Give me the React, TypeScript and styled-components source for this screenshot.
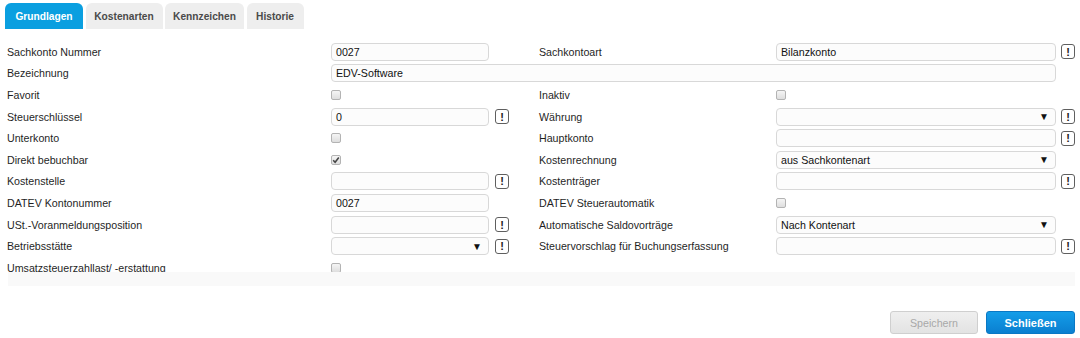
import React from 'react';
import styled, { createGlobalStyle } from 'styled-components';

const GlobalStyle = createGlobalStyle`
  html, body {
    margin: 0;
    padding: 0;
    background: #fff;
  }
  body {
    font-family: "Liberation Sans", Arial, sans-serif;
    font-size: 10.67px;
    color: #1f1f1f;
  }
`;

const Page = styled.div`
  width: 1080px;
  height: 338px;
  overflow: hidden;
  display: flex;
  flex-direction: column;
`;

const TabBar = styled.div`
  display: flex;
  gap: 2.5px;
  padding: 3px 0 0 5px;
  height: 26px;
`;

const Tab = styled.div<{ $active?: boolean; $width: number }>`
  width: ${p => p.$width}px;
  display: flex;
  align-items: center;
  justify-content: center;
  font-size: 10.2px;
  font-weight: bold;
  border-radius: 6px 6px 0 0;
  background: ${p => (p.$active ? '#0a9fe0' : '#eeeeee')};
  color: ${p => (p.$active ? '#ffffff' : '#4a4a4a')};
`;

const FormPanel = styled.div`
  height: 243px;
  box-sizing: border-box;
  padding: 12px 0 0 7px;
  overflow: hidden;
`;

const FormGrid = styled.div`
  display: grid;
  grid-template-columns: 324px 158px 50px 237px 280px 24px;
  grid-auto-rows: 21.6px;
`;

const Label = styled.div`
  display: flex;
  align-items: center;
  white-space: nowrap;
`;

const Cell = styled.div<{ $wide?: boolean }>`
  display: flex;
  align-items: center;
  grid-column: ${p => (p.$wide ? 'span 4' : 'span 1')};
`;

const ActionCell = styled.div<{ $inset: number }>`
  display: flex;
  align-items: center;
  padding-left: ${p => p.$inset}px;
`;

const TextBox = styled.div`
  width: 100%;
  height: 18px;
  box-sizing: border-box;
  border: 1px solid #d8d8d8;
  border-radius: 4px;
  background: #fcfcfc;
  padding: 0 4px;
  display: flex;
  align-items: center;
  justify-content: space-between;
  color: #111;
  white-space: nowrap;
`;

const Arrow = styled.span`
  font-size: 10px;
  color: #111;
  margin-right: 2px;
`;

const Check = styled.span<{ $checked?: boolean }>`
  width: 10px;
  height: 10px;
  box-sizing: border-box;
  border: 1px solid #b3b3b3;
  border-radius: 2px;
  background: linear-gradient(#f5f5f5, #dedede);
  display: flex;
  align-items: center;
  justify-content: center;
`;

const Bang = styled.span`
  width: 14px;
  height: 15px;
  box-sizing: border-box;
  border: 1px solid #5f5f5f;
  border-radius: 3px;
  background: #fff;
  display: flex;
  align-items: center;
  justify-content: center;
  font-size: 11px;
  font-weight: bold;
  color: #222;
`;

const Band = styled.div`
  height: 14px;
  margin: 0 5px 0 8px;
  background: #f9f9f9;
`;

const Footer = styled.div`
  display: flex;
  justify-content: flex-end;
  gap: 8px;
  padding: 25px 5px 0 0;
`;

const Button = styled.button<{ $primary?: boolean }>`
  width: ${p => (p.$primary ? 89 : 88)}px;
  height: 23px;
  border-radius: 3px;
  font-family: "Liberation Sans", Arial, sans-serif;
  font-size: ${p => (p.$primary ? '11px' : '10.67px')};
  font-weight: ${p => (p.$primary ? 'bold' : 'normal')};
  border: 1px solid ${p => (p.$primary ? '#0a78c4' : '#cfcfcf')};
  background: ${p =>
    p.$primary ? 'linear-gradient(#149de8, #0a7fd0)' : 'linear-gradient(#efefef, #e3e3e3)'};
  color: ${p => (p.$primary ? '#ffffff' : '#a8a8a8')};
  padding: 0;
`;

type Control =
  | { kind: 'text'; value?: string; wide?: boolean; action?: boolean }
  | { kind: 'select'; value?: string; action?: boolean }
  | { kind: 'check'; checked?: boolean }
  | { kind: 'none' };

type Side = { label: string; control: Control };

const tabs = [
  { label: 'Grundlagen', width: 78 },
  { label: 'Kostenarten', width: 77 },
  { label: 'Kennzeichen', width: 79 },
  { label: 'Historie', width: 57 },
];

const rows: [Side, Side | null][] = [
  [
    { label: 'Sachkonto Nummer', control: { kind: 'text', value: '0027' } },
    { label: 'Sachkontoart', control: { kind: 'text', value: 'Bilanzkonto', action: true } },
  ],
  [{ label: 'Bezeichnung', control: { kind: 'text', value: 'EDV-Software', wide: true } }, null],
  [
    { label: 'Favorit', control: { kind: 'check' } },
    { label: 'Inaktiv', control: { kind: 'check' } },
  ],
  [
    { label: 'Steuerschlüssel', control: { kind: 'text', value: '0', action: true } },
    { label: 'Währung', control: { kind: 'select', action: true } },
  ],
  [
    { label: 'Unterkonto', control: { kind: 'check' } },
    { label: 'Hauptkonto', control: { kind: 'text', action: true } },
  ],
  [
    { label: 'Direkt bebuchbar', control: { kind: 'check', checked: true } },
    { label: 'Kostenrechnung', control: { kind: 'select', value: 'aus Sachkontenart' } },
  ],
  [
    { label: 'Kostenstelle', control: { kind: 'text', action: true } },
    { label: 'Kostenträger', control: { kind: 'text', action: true } },
  ],
  [
    { label: 'DATEV Kontonummer', control: { kind: 'text', value: '0027' } },
    { label: 'DATEV Steuerautomatik', control: { kind: 'check' } },
  ],
  [
    { label: 'USt.-Voranmeldungsposition', control: { kind: 'text', action: true } },
    { label: 'Automatische Saldovorträge', control: { kind: 'select', value: 'Nach Kontenart' } },
  ],
  [
    { label: 'Betriebsstätte', control: { kind: 'select', action: true } },
    { label: 'Steuervorschlag für Buchungserfassung', control: { kind: 'text', action: true } },
  ],
  [{ label: 'Umsatzsteuerzahllast/ -erstattung', control: { kind: 'check' } }, null],
];

function CheckMark() {
  return (
    <svg width="8" height="8" viewBox="0 0 8 8">
      <path d="M1.2 4.3 L3.1 6.2 L6.8 1.6" fill="none" stroke="#444" strokeWidth="1.6" />
    </svg>
  );
}

function ControlView({ control }: { control: Control }) {
  switch (control.kind) {
    case 'text':
      return <TextBox>{control.value}</TextBox>;
    case 'select':
      return (
        <TextBox>
          <span>{control.value}</span>
          <Arrow>▼</Arrow>
        </TextBox>
      );
    case 'check':
      return <Check $checked={control.checked}>{control.checked && <CheckMark />}</Check>;
    default:
      return null;
  }
}

function hasAction(c: Control) {
  return (c.kind === 'text' || c.kind === 'select') && !!c.action;
}

function FormRow({ left, right }: { left: Side; right: Side | null }) {
  const wide = left.control.kind === 'text' && !!left.control.wide;
  return (
    <>
      <Label>{left.label}</Label>
      <Cell $wide={wide}>
        <ControlView control={left.control} />
      </Cell>
      {!wide && (
        <ActionCell $inset={6}>{hasAction(left.control) && <Bang>!</Bang>}</ActionCell>
      )}
      {!wide && (
        <>
          <Label>{right?.label}</Label>
          <Cell>{right && <ControlView control={right.control} />}</Cell>
        </>
      )}
      <ActionCell $inset={5}>{right && hasAction(right.control) && <Bang>!</Bang>}</ActionCell>
    </>
  );
}

export default function App() {
  return (
    <Page>
      <GlobalStyle />
      <TabBar>
        {tabs.map((t, i) => (
          <Tab key={t.label} $active={i === 0} $width={t.width}>
            {t.label}
          </Tab>
        ))}
      </TabBar>
      <FormPanel>
        <FormGrid>
          {rows.map(([left, right]) => (
            <FormRow key={left.label} left={left} right={right} />
          ))}
        </FormGrid>
      </FormPanel>
      <Band />
      <Footer>
        <Button disabled>Speichern</Button>
        <Button $primary>Schließen</Button>
      </Footer>
    </Page>
  );
}
